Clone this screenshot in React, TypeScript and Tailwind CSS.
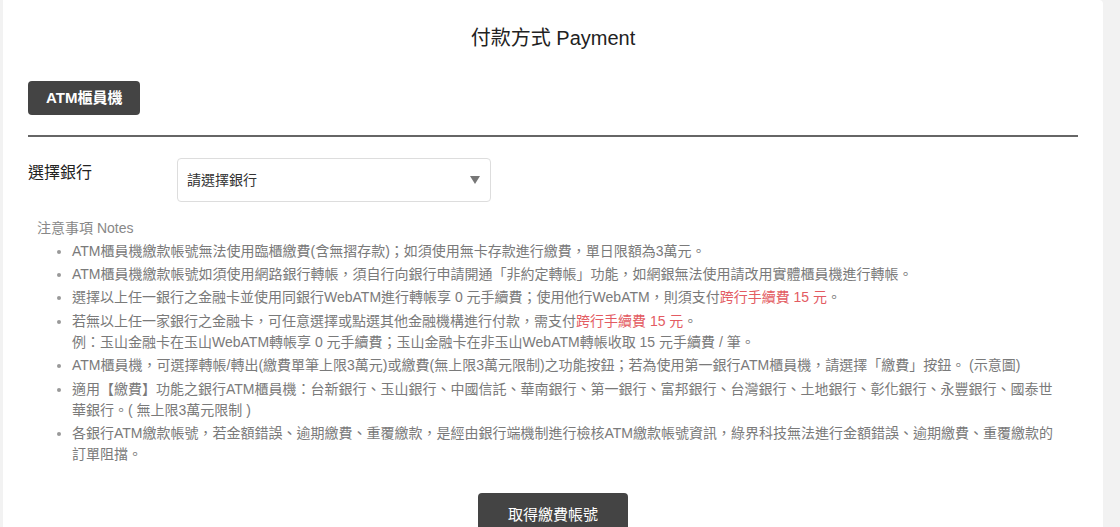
const notes = [
  {
    lines: [
      <>ATM櫃員機繳款帳號無法使用臨櫃繳費(含無摺存款)；如須使用無卡存款進行繳費，單日限額為3萬元。</>,
    ],
  },
  {
    lines: [
      <>ATM櫃員機繳款帳號如須使用網路銀行轉帳，須自行向銀行申請開通「非約定轉帳」功能，如網銀無法使用請改用實體櫃員機進行轉帳。</>,
    ],
  },
  {
    lines: [
      <>
        選擇以上任一銀行之金融卡並使用同銀行WebATM進行轉帳享 0 元手續費；使用他行WebATM，則須支付
        <span className="text-[#e35b62]">跨行手續費 15 元</span>。
      </>,
    ],
  },
  {
    lines: [
      <>
        若無以上任一家銀行之金融卡，可任意選擇或點選其他金融機構進行付款，需支付
        <span className="text-[#e35b62]">跨行手續費 15 元</span>。
      </>,
      <>例：玉山金融卡在玉山WebATM轉帳享 0 元手續費；玉山金融卡在非玉山WebATM轉帳收取 15 元手續費 / 筆。</>,
    ],
  },
  {
    lines: [
      <>ATM櫃員機，可選擇轉帳/轉出(繳費單筆上限3萬元)或繳費(無上限3萬元限制)之功能按鈕；若為使用第一銀行ATM櫃員機，請選擇「繳費」按鈕。 (示意圖)</>,
    ],
  },
  {
    lines: [
      <>適用【繳費】功能之銀行ATM櫃員機：台新銀行、玉山銀行、中國信託、華南銀行、第一銀行、富邦銀行、台灣銀行、土地銀行、彰化銀行、永豐銀行、國泰世華銀行。( 無上限3萬元限制 )</>,
    ],
  },
  {
    lines: [
      <>各銀行ATM繳款帳號，若金額錯誤、逾期繳費、重覆繳款，是經由銀行端機制進行檢核ATM繳款帳號資訊，綠界科技無法進行金額錯誤、逾期繳費、重覆繳款的訂單阻擋。</>,
    ],
  },
];

export default function App() {
  return (
    <div className="min-h-[527px] bg-[#f2f2f2] pl-[3px] pr-[17px] font-['Liberation_Sans','Noto_Sans_CJK_TC',sans-serif]">
      <div className="bg-white rounded-tr-[4px] px-[25px] pt-[24px] pb-[40px] min-h-[527px]">
        {/* Title */}
        <h2 className="text-center text-[20px] leading-[28px] text-[#222]">
          付款方式 Payment
        </h2>

        {/* Tab */}
        <div className="mt-[29px]">
          <button className="h-[34px] px-[18px] bg-[#444] rounded-[4px] text-white text-[15px] font-bold">
            ATM櫃員機
          </button>
        </div>
        <div className="mt-[20px] h-[2px] bg-[#666]" />

        {/* Bank select */}
        <div className="flex mt-[21px]">
          <div className="w-[149px] pt-[4px] text-[16px] leading-[22px] text-[#222]">
            選擇銀行
          </div>
          <div className="w-[314px] h-[44px] border border-[#ddd] rounded-[4px] flex items-center justify-between pl-[9px] pr-[10px]">
            <span className="text-[14px] text-[#333] pt-[1px]">請選擇銀行</span>
            <svg width="10" height="8" viewBox="0 0 10 8">
              <polygon points="0,0 10,0 5,8" fill="#777" />
            </svg>
          </div>
        </div>

        {/* Notes */}
        <div className="mt-[16px] pl-[9px] text-[14px] leading-[21.3px]">
          <p className="text-[#888]">注意事項 Notes</p>
          <ul className="list-disc pl-[35px] pr-[12px] text-[#7a7a7a] marker:text-[#999] space-y-[2px] mt-[1.5px]">
            {notes.map((n, i) => (
              <li key={i}>
                {n.lines.map((l, j) => (
                  <div key={j}>{l}</div>
                ))}
              </li>
            ))}
          </ul>
        </div>

        {/* Submit */}
        <div className="flex justify-center mt-[27px]">
          <button className="w-[150px] h-[44px] bg-[#444] rounded-[4px] text-white text-[15px]">
            取得繳費帳號
          </button>
        </div>
      </div>
    </div>
  );
}
